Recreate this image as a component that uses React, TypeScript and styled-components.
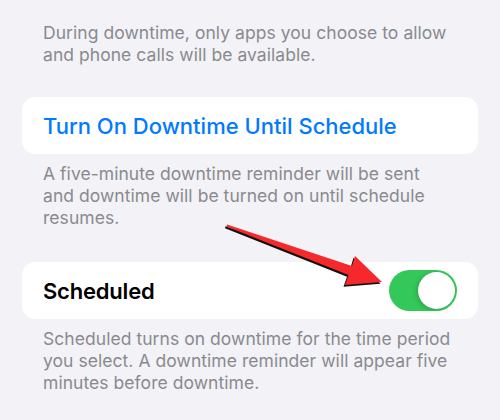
import React from "react";
import styled, { createGlobalStyle } from "styled-components";

const Global = createGlobalStyle`
  html, body { margin: 0; padding: 0; background: #f2f2f7; }
  body { font-family: Inter, "Noto Sans", "Liberation Sans", sans-serif; -webkit-font-smoothing: antialiased; }
`;

const Page = styled.div`
  position: relative;
  width: 500px;
  height: 420px;
  box-sizing: border-box;
  padding: 22px 22px 0;
  background: #f2f2f7;
  overflow: hidden;
`;

const Caption = styled.p`
  margin: 0;
  padding: 0 26px 0 21px;
  font-size: 17.5px;
  line-height: 22px;
  color: #8a8a8e;
  letter-spacing: 0.05px;
`;

const Section = styled.div<{ $gap: number }>`
  margin-top: ${(p) => p.$gap}px;
  display: flex;
  flex-direction: column;
  gap: 9px;
`;

const Card = styled.div`
  height: 57px;
  background: #ffffff;
  border-radius: 13px;
  display: flex;
  align-items: center;
  justify-content: space-between;
  padding: 0 21px;
`;

const ActionLabel = styled.span`
  font-size: 22px;
  font-weight: 500;
  color: #007aff;
  letter-spacing: 0px;
`;

const RowLabel = styled.span`
  font-size: 22px;
  font-weight: 600;
  color: #000;
  letter-spacing: -0.2px;
`;

const Toggle = styled.div<{ $on: boolean }>`
  position: relative;
  width: 68px;
  height: 41px;
  border-radius: 21px;
  background: ${(p) => (p.$on ? "#34c759" : "#e9e9eb")};
  flex-shrink: 0;
`;

const Knob = styled.div<{ $on: boolean }>`
  position: absolute;
  top: 2px;
  left: ${(p) => (p.$on ? "29px" : "2px")};
  width: 37px;
  height: 37px;
  border-radius: 50%;
  background: #fff;
  box-shadow: -2px 1px 4px rgba(0, 0, 0, 0.15), 0 0 1px rgba(0, 0, 0, 0.1);
`;

const ArrowLayer = styled.svg`
  position: absolute;
  left: 0;
  top: 0;
  pointer-events: none;
`;

const arrow = "227,224.5 352,266 355,256 382,282 345,285 348.5,275 226.5,226.5";

export default function App() {
  return (
    <>
      <Global />
      <Page>
        <Caption>
          During downtime, only apps you choose to allow and phone calls will be available.
        </Caption>
        <Section $gap={31}>
          <Card>
            <ActionLabel>Turn On Downtime Until Schedule</ActionLabel>
          </Card>
          <Caption>
            A five-minute downtime reminder will be sent and downtime will be turned on until schedule resumes.
          </Caption>
        </Section>
        <Section $gap={33}>
          <Card>
            <RowLabel>Scheduled</RowLabel>
            <Toggle $on>
              <Knob $on />
            </Toggle>
          </Card>
          <Caption>
            Scheduled turns on downtime for the time period you select. A downtime reminder will appear five minutes before downtime.
          </Caption>
        </Section>
        <ArrowLayer width="500" height="420" viewBox="0 0 500 420">
          <polygon points={arrow} fill="#111" transform="translate(-1.5,1.8)" />
          <polygon points={arrow} fill="#f5292b" />
        </ArrowLayer>
      </Page>
    </>
  );
}
